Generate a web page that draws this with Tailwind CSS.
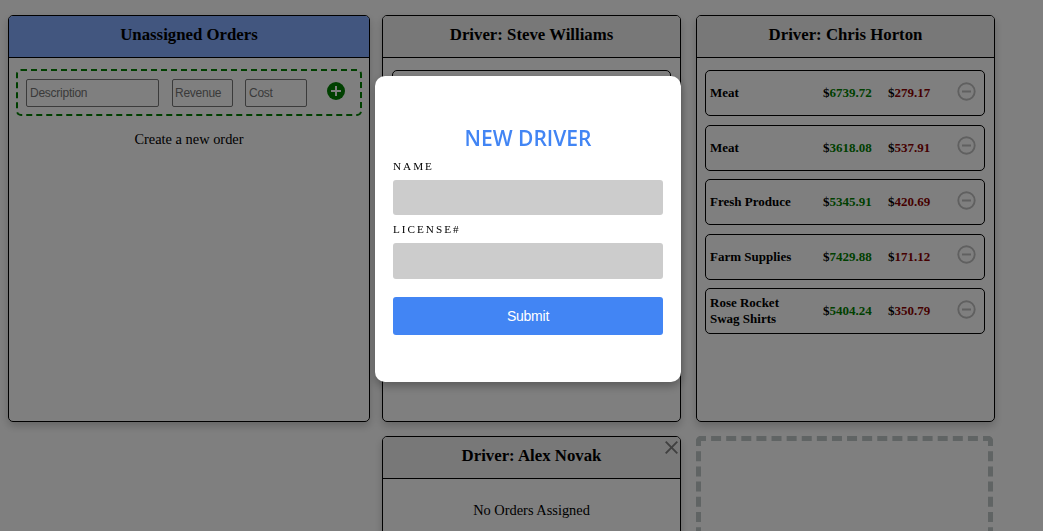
<!DOCTYPE html>
<html lang="en">
<head>
<meta charset="utf-8">
<title>Driver Orders</title>
<script src="https://cdn.jsdelivr.net/npm/@tailwindcss/browser@4"></script>
</head>
<body class="h-screen overflow-hidden bg-white font-['Liberation_Serif',serif] text-black">
<main class="flex h-screen items-start gap-3 overflow-hidden pl-2 pt-[15px]">
  <section class="h-[407px] w-[362px] shrink-0 overflow-hidden rounded-[5px] border border-black shadow-[0_4px_8px_rgba(0,0,0,0.2)]">
    <h2 class="h-[42px] border-b border-black bg-[#84acff] pt-[9px] text-center text-[16.8px] leading-5 font-bold">Unassigned Orders</h2>
    <div class="mt-[11px] mx-[7px] flex h-[47px] items-start rounded-[5px] border-2 border-dashed border-[green] pl-2 pt-2 font-['Liberation_Sans',sans-serif]">
      <input aria-label="Description" placeholder="Description" class="h-7 w-[133px] rounded-[2px] border border-[#767676] px-[3px] text-[12px] tracking-[-0.25px] placeholder:text-[#757575]">
      <input aria-label="Revenue" placeholder="Revenue" class="ml-[13px] h-7 w-[61px] rounded-[2px] border border-[#767676] px-[2px] text-[12px] tracking-[-0.25px] placeholder:text-[#757575]">
      <input aria-label="Cost" placeholder="Cost" class="ml-3 h-7 w-[62px] rounded-[2px] border border-[#767676] px-[3px] text-[12px] tracking-[-0.25px] placeholder:text-[#757575]">
      <svg class="ml-5 mt-[3px] size-[18px]" viewBox="0 0 18 18"><circle cx="9" cy="9" r="9" fill="green"/><path d="M9 4v10M4 9h10" stroke="#fff" stroke-width="2"/></svg>
    </div>
    <p class="mt-[13px] text-center text-[14.4px] leading-5">Create a new order</p>
  </section>

  <div class="flex w-[299px] shrink-0 flex-col gap-[14px]">
    <section class="h-[407px] shrink-0 overflow-hidden rounded-[5px] border border-black shadow-[0_4px_8px_rgba(0,0,0,0.2)]">
      <h2 class="h-[42px] border-b border-black bg-[#f0f0f0] pt-[9px] text-center text-[16.8px] leading-5 font-bold">Driver: Steve Williams</h2>
      <div class="mx-[9px] mt-3 h-[46px] rounded-[5px] border border-black"></div>
    </section>
    <section class="relative h-[407px] shrink-0 overflow-hidden rounded-[5px] border border-black shadow-[0_4px_8px_rgba(0,0,0,0.2)]">
      <h2 class="h-[42px] border-b border-black bg-[#f0f0f0] pt-[9px] text-center text-[16.8px] leading-5 font-bold">Driver: Alex Novak</h2>
      <svg class="absolute right-[2px] top-1 size-[13px]" viewBox="0 0 13 13"><path d="M.7.7l11.6 11.6M12.3.7L.7 12.3" stroke="#808080" stroke-width="1.9"/></svg>
      <p class="mt-[21px] text-center text-[14.4px] leading-5">No Orders Assigned</p>
    </section>
  </div>

  <div class="ml-[3px] flex w-[299px] shrink-0 flex-col gap-[14px]">
    <section class="h-[407px] shrink-0 overflow-hidden rounded-[5px] border border-black shadow-[0_4px_8px_rgba(0,0,0,0.2)]">
      <h2 class="h-[42px] border-b border-black bg-[#f0f0f0] pt-[9px] text-center text-[16.8px] leading-5 font-bold">Driver: Chris Horton</h2>
      <ul class="ml-2 mt-3 flex w-[280px] flex-col gap-[8.5px] text-[13px] leading-4 font-bold">
        <li class="flex h-[46px] items-center rounded-[5px] border border-black pl-1">
          <span class="w-[113px]">Meat</span><span class="w-[65px]">$<span class="text-[green]">6739.72</span></span><span class="w-[69px]">$<span class="text-[#8b0000]">279.17</span></span>
          <svg class="mb-[4px] size-[19px]" viewBox="0 0 19 19" fill="none" stroke="#c0c0c0" stroke-width="1.9"><circle cx="9.5" cy="9.5" r="8.2"/><path d="M5 9.5h9"/></svg>
        </li>
        <li class="flex h-[46px] items-center rounded-[5px] border border-black pl-1">
          <span class="w-[113px]">Meat</span><span class="w-[65px]">$<span class="text-[green]">3618.08</span></span><span class="w-[69px]">$<span class="text-[#8b0000]">537.91</span></span>
          <svg class="mb-[5px] size-[19px]" viewBox="0 0 19 19" fill="none" stroke="#c0c0c0" stroke-width="1.9"><circle cx="9.5" cy="9.5" r="8.2"/><path d="M5 9.5h9"/></svg>
        </li>
        <li class="flex h-[46px] items-center rounded-[5px] border border-black pl-1">
          <span class="w-[113px]">Fresh Produce</span><span class="w-[65px]">$<span class="text-[green]">5345.91</span></span><span class="w-[69px]">$<span class="text-[#8b0000]">420.69</span></span>
          <svg class="mb-[4px] size-[19px]" viewBox="0 0 19 19" fill="none" stroke="#c0c0c0" stroke-width="1.9"><circle cx="9.5" cy="9.5" r="8.2"/><path d="M5 9.5h9"/></svg>
        </li>
        <li class="flex h-[46px] items-center rounded-[5px] border border-black pl-1">
          <span class="w-[113px]">Farm Supplies</span><span class="w-[65px]">$<span class="text-[green]">7429.88</span></span><span class="w-[69px]">$<span class="text-[#8b0000]">171.12</span></span>
          <svg class="mb-[5px] size-[19px]" viewBox="0 0 19 19" fill="none" stroke="#c0c0c0" stroke-width="1.9"><circle cx="9.5" cy="9.5" r="8.2"/><path d="M5 9.5h9"/></svg>
        </li>
        <li class="flex h-[46px] items-center rounded-[5px] border border-black pl-1">
          <span class="w-[113px] pr-5">Rose Rocket Swag Shirts</span><span class="w-[65px]">$<span class="text-[green]">5404.24</span></span><span class="w-[69px]">$<span class="text-[#8b0000]">350.79</span></span>
          <svg class="mb-[4px] size-[19px]" viewBox="0 0 19 19" fill="none" stroke="#c0c0c0" stroke-width="1.9"><circle cx="9.5" cy="9.5" r="8.2"/><path d="M5 9.5h9"/></svg>
        </li>
      </ul>
    </section>
    <div class="h-[405px] w-[297px] shrink-0 rounded-[5px] border-[5px] border-dashed border-[#c0c8c8]"></div>
  </div>
</main>

<div class="fixed inset-0 flex items-start bg-black/50 pl-[375px] pt-[76px]">
  <form class="flex h-[306px] w-[306px] flex-col rounded-[10px] bg-white px-[18px] pt-[47px] shadow-[0_4px_10px_rgba(0,0,0,0.3)]">
    <h1 class="text-center font-['Open_Sans',sans-serif] text-[21px] leading-[30px] font-semibold text-[#4285f4]">NEW DRIVER</h1>
    <label for="name" class="mt-[5px] h-[22px] text-[11.2px] leading-4 tracking-[2px]">NAME</label>
    <input id="name" class="h-[35px] shrink-0 rounded-[3px] bg-[#ccc]">
    <label for="license" class="mt-[6px] h-[22px] text-[11.2px] leading-4 tracking-[2px]">LICENSE#</label>
    <input id="license" class="h-9 shrink-0 rounded-[3px] bg-[#ccc]">
    <button type="button" class="mt-[18px] h-[38px] shrink-0 rounded-[3px] bg-[#4285f4] font-['Liberation_Sans',sans-serif] text-[14px] tracking-[-0.25px] text-white">Submit</button>
  </form>
</div>
</body>
</html>
